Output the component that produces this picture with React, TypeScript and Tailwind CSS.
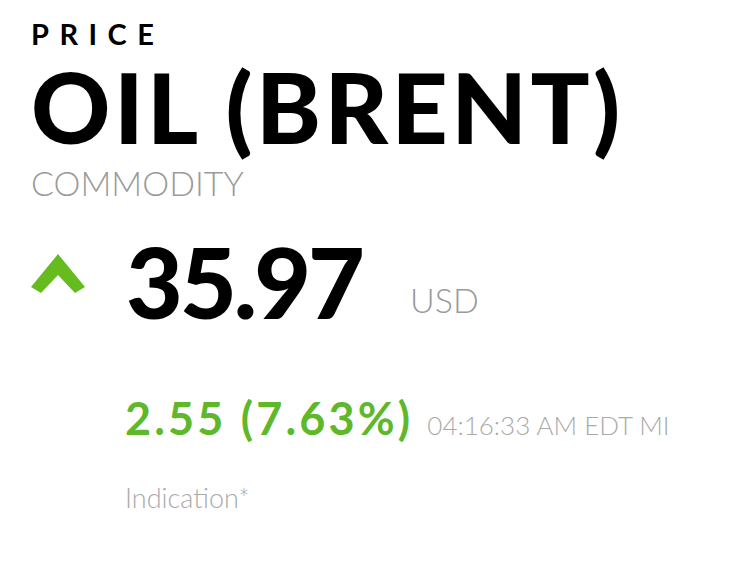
export default function App() {
  return (
    <div className="w-[748px] h-[570px] bg-white font-['Lato','Liberation_Sans',sans-serif] overflow-hidden">
      <div className="pl-[31px] pt-[18px]">
        <div className="text-[29px] leading-[32px] font-bold tracking-[0.36em] text-black">PRICE</div>
        <h1 className="mt-[8px] text-[98px] leading-[96px] font-black text-black tracking-[0.035em]">OIL (BRENT)</h1>
        <div className="mt-[8px] text-[34px] leading-[42px] font-light text-[#9a9a9a]">COMMODITY</div>

        <div className="mt-[22px] flex items-start">
          <svg width="60" height="46" viewBox="0 0 60 46" className="ml-[-3px] mt-[24px] shrink-0">
            <path d="M3 37 L30 4 L57 37 L47 43 L30 25 L13 43 Z" fill="#66bb1f" />
          </svg>
          <div className="ml-[38px] text-[98px] leading-[110px] font-black text-black tracking-[-0.03em]">35.97</div>
          <div className="ml-[48px] mt-[53px] text-[34px] leading-[42px] font-light text-[#9a9a9a]">USD</div>
        </div>

        <div className="ml-[94px] mt-[56px] flex items-baseline">
          <span className="text-[45px] leading-[52px] font-bold text-[#5fb82a] tracking-[0.07em]">2.55 (7.63%)</span>
          <span className="ml-[14px] text-[26px] leading-[32px] font-light text-[#aaaaaa]">04:16:33 AM EDT MI</span>
        </div>

        <div className="ml-[94px] mt-[38px] text-[27px] leading-[32px] font-light text-[#aaaaaa]">Indication*</div>
      </div>
    </div>
  );
}
